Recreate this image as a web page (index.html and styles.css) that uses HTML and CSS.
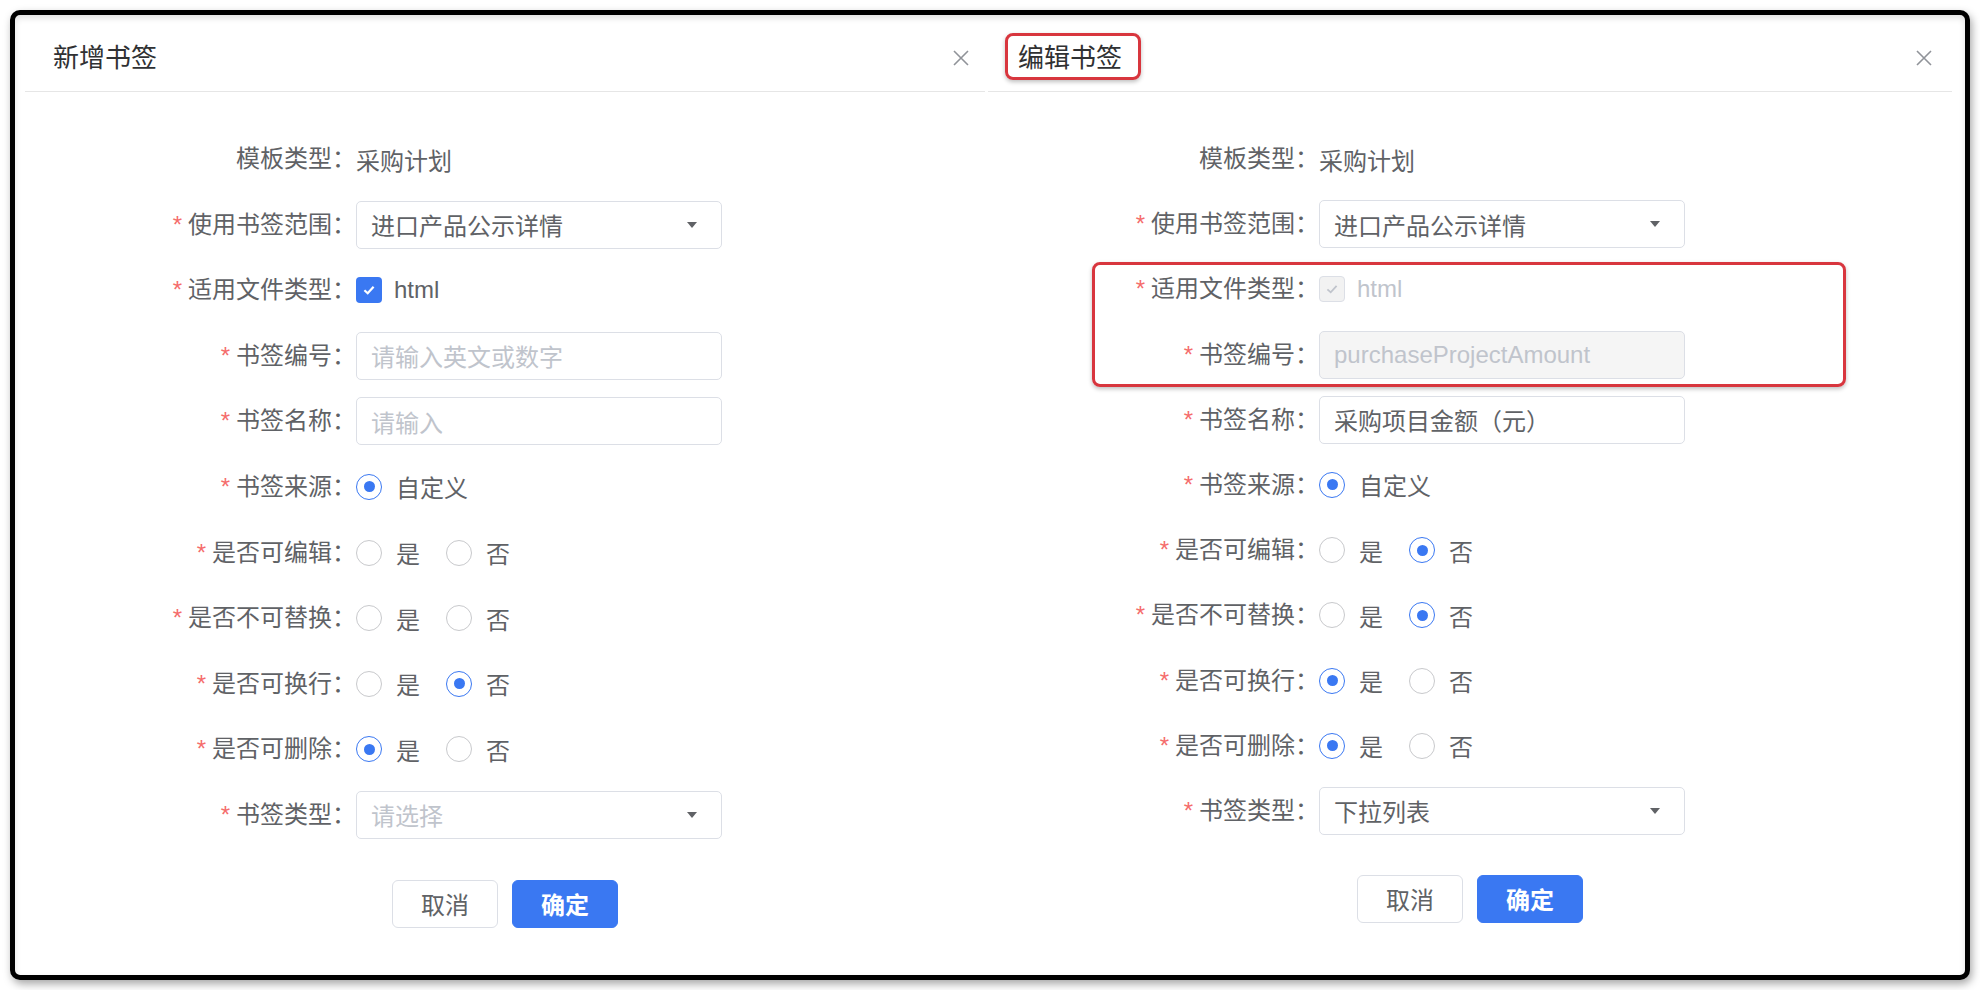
FILE: index.html
```html
<!DOCTYPE html>
<html lang="zh-CN">
<head>
    <meta charset="UTF-8">
    <title>书签</title>
    <link rel="stylesheet" href="styles.css">
</head>
<body>

<div class="frame">

    <!-- 新增 -->
    <div class="dialog dialog-add">
        <div class="dialog-header">
            <span class="dialog-title">新增书签</span>
            <svg class="dialog-close" width="18" height="18" viewBox="0 0 18 18"><path d="M2 2L16 16M16 2L2 16" stroke="#909399" stroke-width="1.6"/></svg>
        </div>
        <div class="dialog-body">
            <div class="form">
                <div class="form-item">
                    <label class="form-label">模板类型：</label>
                    <span class="plain-text">采购计划</span>
                </div>
                <div class="form-item">
                    <label class="form-label required">使用书签范围：</label>
                    <div class="input select">进口产品公示详情<i class="caret"></i></div>
                </div>
                <div class="form-item">
                    <label class="form-label required">适用文件类型：</label>
                    <div class="checkbox">
                        <span class="checkbox-box"><svg width="14" height="14" viewBox="0 0 14 14"><path d="M2.4 7.3L5.7 10.3L11.6 3.8" fill="none" stroke="#fff" stroke-width="2.2"/></svg></span>
                        <span class="checkbox-text">html</span>
                    </div>
                </div>
                <div class="form-item">
                    <label class="form-label required">书签编号：</label>
                    <div class="input placeholder">请输入英文或数字</div>
                </div>
                <div class="form-item">
                    <label class="form-label required">书签名称：</label>
                    <div class="input placeholder">请输入</div>
                </div>
                <div class="form-item">
                    <label class="form-label required">书签来源：</label>
                    <div class="radio-group">
                        <span class="radio is-checked"><i class="radio-circle"></i>自定义</span>
                    </div>
                </div>
                <div class="form-item">
                    <label class="form-label required">是否可编辑：</label>
                    <div class="radio-group">
                        <span class="radio"><i class="radio-circle"></i>是</span>
                        <span class="radio"><i class="radio-circle"></i>否</span>
                    </div>
                </div>
                <div class="form-item">
                    <label class="form-label required">是否不可替换：</label>
                    <div class="radio-group">
                        <span class="radio"><i class="radio-circle"></i>是</span>
                        <span class="radio"><i class="radio-circle"></i>否</span>
                    </div>
                </div>
                <div class="form-item">
                    <label class="form-label required">是否可换行：</label>
                    <div class="radio-group">
                        <span class="radio"><i class="radio-circle"></i>是</span>
                        <span class="radio is-checked"><i class="radio-circle"></i>否</span>
                    </div>
                </div>
                <div class="form-item">
                    <label class="form-label required">是否可删除：</label>
                    <div class="radio-group">
                        <span class="radio is-checked"><i class="radio-circle"></i>是</span>
                        <span class="radio"><i class="radio-circle"></i>否</span>
                    </div>
                </div>
                <div class="form-item">
                    <label class="form-label required">书签类型：</label>
                    <div class="input select placeholder">请选择<i class="caret"></i></div>
                </div>
            </div>
            <div class="dialog-footer">
                <button class="btn btn-default">取消</button>
                <button class="btn btn-primary">确定</button>
            </div>
        </div>
    </div>

    <!-- 编辑 -->
    <div class="dialog dialog-edit">
        <div class="dialog-header">
            <span class="dialog-title marked">编辑书签</span>
            <svg class="dialog-close" width="18" height="18" viewBox="0 0 18 18"><path d="M2 2L16 16M16 2L2 16" stroke="#909399" stroke-width="1.6"/></svg>
        </div>
        <div class="dialog-body">
            <div class="form">
                <div class="form-item">
                    <label class="form-label">模板类型：</label>
                    <span class="plain-text">采购计划</span>
                </div>
                <div class="form-item">
                    <label class="form-label required">使用书签范围：</label>
                    <div class="input select">进口产品公示详情<i class="caret"></i></div>
                </div>
                <div class="highlight">
                    <div class="form-item">
                        <label class="form-label required">适用文件类型：</label>
                        <div class="checkbox is-disabled">
                            <span class="checkbox-box"><svg width="14" height="14" viewBox="0 0 14 14"><path d="M2.4 7.3L5.7 10.3L11.6 3.8" fill="none" stroke="#c0c4cc" stroke-width="1.8"/></svg></span>
                            <span class="checkbox-text">html</span>
                        </div>
                    </div>
                    <div class="form-item">
                        <label class="form-label required">书签编号：</label>
                        <div class="input is-disabled">purchaseProjectAmount</div>
                    </div>
                </div>
                <div class="form-item">
                    <label class="form-label required">书签名称：</label>
                    <div class="input">采购项目金额（元）</div>
                </div>
                <div class="form-item">
                    <label class="form-label required">书签来源：</label>
                    <div class="radio-group">
                        <span class="radio is-checked"><i class="radio-circle"></i>自定义</span>
                    </div>
                </div>
                <div class="form-item">
                    <label class="form-label required">是否可编辑：</label>
                    <div class="radio-group">
                        <span class="radio"><i class="radio-circle"></i>是</span>
                        <span class="radio is-checked"><i class="radio-circle"></i>否</span>
                    </div>
                </div>
                <div class="form-item">
                    <label class="form-label required">是否不可替换：</label>
                    <div class="radio-group">
                        <span class="radio"><i class="radio-circle"></i>是</span>
                        <span class="radio is-checked"><i class="radio-circle"></i>否</span>
                    </div>
                </div>
                <div class="form-item">
                    <label class="form-label required">是否可换行：</label>
                    <div class="radio-group">
                        <span class="radio is-checked"><i class="radio-circle"></i>是</span>
                        <span class="radio"><i class="radio-circle"></i>否</span>
                    </div>
                </div>
                <div class="form-item">
                    <label class="form-label required">是否可删除：</label>
                    <div class="radio-group">
                        <span class="radio is-checked"><i class="radio-circle"></i>是</span>
                        <span class="radio"><i class="radio-circle"></i>否</span>
                    </div>
                </div>
                <div class="form-item">
                    <label class="form-label required">书签类型：</label>
                    <div class="input select">下拉列表<i class="caret"></i></div>
                </div>
            </div>
            <div class="dialog-footer">
                <button class="btn btn-default">取消</button>
                <button class="btn btn-primary">确定</button>
            </div>
        </div>
    </div>

</div>

</body>
</html>
```

FILE: styles.css
```css
* {
    box-sizing: border-box;
}

body {
    margin: 0;
    padding: 10px;
    background: #fff;
    font-family: "Liberation Sans", "Noto Sans CJK SC", sans-serif;
    color: #606266;
}

.frame {
    display: flex;
    gap: 3px;
    height: 970px;
    padding-left: 10px;
    border: 5px solid #000;
    border-radius: 10px;
    background: #fff;
    box-shadow: 2px 4px 8px rgba(0, 0, 0, 0.35), inset 0 3px 6px rgba(0, 0, 0, 0.12);
}

.dialog {
    --row-gap: 17.6px;
    display: flex;
    flex-direction: column;
}

.dialog-add {
    width: 960px;
}

.dialog-edit {
    --row-gap: 17.2px;
    width: 964px;
}

/* header */
.dialog-header {
    display: flex;
    justify-content: space-between;
    align-items: center;
    padding: 24px 15px 14px 28px;
    border-bottom: 1px solid #e6e6e6;
}

.dialog-edit .dialog-header {
    padding-left: 30px;
    padding-right: 19px;
}

.dialog-title {
    position: relative;
    display: inline-block;
    font-size: 26px;
    line-height: 38px;
    color: #303133;
}

.dialog-title.marked::before {
    content: "";
    position: absolute;
    top: -6px;
    bottom: -3px;
    left: -13px;
    right: -19px;
    border: 3px solid #d8363e;
    border-radius: 8px;
    box-shadow: 0 2px 4px rgba(0, 0, 0, 0.25);
}

/* body */
.dialog-body {
    padding-top: 43px;
}

.form {
    display: flex;
    flex-direction: column;
    gap: var(--row-gap);
}

.highlight {
    position: relative;
    display: flex;
    flex-direction: column;
    gap: var(--row-gap);
}

.highlight::after {
    content: "";
    position: absolute;
    top: -3px;
    bottom: -8px;
    left: 104px;
    right: 106px;
    border: 3px solid #d8363e;
    border-radius: 8px;
    box-shadow: 0 2px 4px rgba(0, 0, 0, 0.25);
}

.form-item {
    display: flex;
    align-items: center;
    height: 48px;
    font-size: 24px;
}

.form-label {
    flex-shrink: 0;
    width: 331px;
    text-align: right;
    line-height: 48px;
    white-space: nowrap;
    color: #606266;
}

.form-label.required::before {
    content: "*";
    color: #f56c6c;
    margin-right: 6px;
}

.plain-text {
    color: #606266;
}

.input {
    display: flex;
    align-items: center;
    width: 366px;
    height: 48px;
    padding: 0 14px;
    border: 1px solid #dcdfe6;
    border-radius: 5px;
    color: #606266;
    white-space: nowrap;
}

.input.placeholder {
    color: #c0c4cc;
}

.input.is-disabled {
    background: #f5f5f5;
    color: #c0c4cc;
}

.select {
    justify-content: space-between;
    padding-right: 24px;
}

.caret {
    width: 0;
    height: 0;
    border-left: 5px solid transparent;
    border-right: 5px solid transparent;
    border-top: 6px solid #606266;
}

/* checkbox */
.checkbox {
    display: flex;
    align-items: center;
}

.checkbox-box {
    display: flex;
    align-items: center;
    justify-content: center;
    width: 26px;
    height: 26px;
    border-radius: 4px;
    background: #3a78f2;
}

.checkbox-text {
    margin-left: 12px;
    color: #606266;
}

.checkbox.is-disabled .checkbox-box {
    background: #f2f2f2;
    border: 1px solid #dcdfe6;
}

.checkbox.is-disabled .checkbox-text {
    color: #c0c4cc;
}

/* radio */
.radio-group {
    display: flex;
    align-items: center;
}

.radio {
    display: flex;
    align-items: center;
    margin-right: 26px;
    color: #606266;
}

.radio-circle {
    position: relative;
    width: 26px;
    height: 26px;
    margin-right: 14px;
    border: 1.5px solid #c8c9cc;
    border-radius: 50%;
    background: #fff;
}

.radio.is-checked .radio-circle {
    border-color: #3a78f2;
}

.radio.is-checked .radio-circle::after {
    content: "";
    position: absolute;
    top: 50%;
    left: 50%;
    width: 11px;
    height: 11px;
    margin: -5.5px 0 0 -5.5px;
    border-radius: 50%;
    background: #3a78f2;
}

/* footer */
.dialog-footer {
    display: flex;
    justify-content: center;
    gap: 14px;
    margin-top: 41px;
}

.dialog-edit .dialog-footer {
    margin-top: 40px;
}

.btn {
    width: 106px;
    height: 48px;
    border-radius: 6px;
    font-family: inherit;
    font-size: 24px;
    cursor: pointer;
}

.btn-default {
    border: 1px solid #dcdfe6;
    background: #fff;
    color: #606266;
}

.btn-primary {
    border: 1px solid #3a78f2;
    background: #3a78f2;
    color: #fff;
    font-weight: bold;
}
```
